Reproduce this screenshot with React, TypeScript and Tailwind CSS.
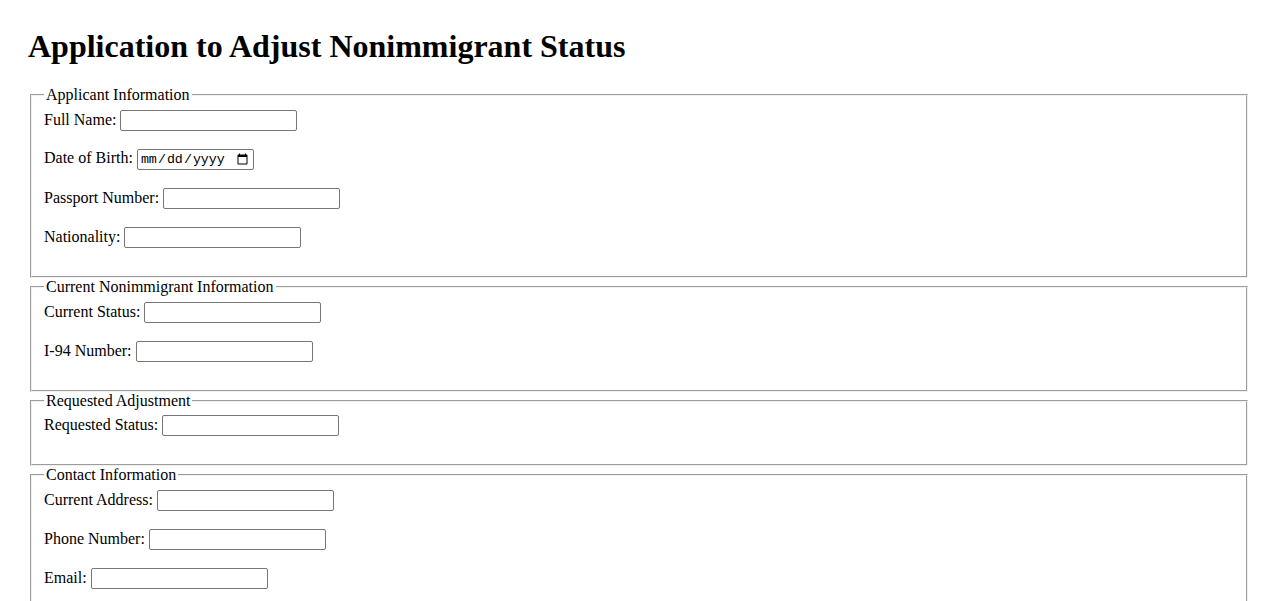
import React from 'react';

type Field = { label: string; type?: string };
type Section = { legend: string; fields: Field[] };

const sections: Section[] = [
  {
    legend: 'Applicant Information',
    fields: [
      { label: 'Full Name:' },
      { label: 'Date of Birth:', type: 'date' },
      { label: 'Passport Number:' },
      { label: 'Nationality:' },
    ],
  },
  {
    legend: 'Current Nonimmigrant Information',
    fields: [{ label: 'Current Status:' }, { label: 'I-94 Number:' }],
  },
  {
    legend: 'Requested Adjustment',
    fields: [{ label: 'Requested Status:' }],
  },
  {
    legend: 'Contact Information',
    fields: [{ label: 'Current Address:' }, { label: 'Phone Number:' }, { label: 'Email:', type: 'email' }],
  },
];

const serif = "font-['Liberation_Serif','Times_New_Roman',serif]";

function FieldRow({ field }: { field: Field }) {
  const isDate = field.type === 'date';
  return (
    <>
      <label>{field.label}</label>{' '}
      {isDate ? (
        <input
          type="date"
          className="h-[21px] w-[117px] rounded-[2px] border border-[#767676] bg-white px-[2px] align-baseline font-['Liberation_Mono','Courier_New',monospace] text-[13.333px] leading-[normal] text-black"
        />
      ) : (
        <input
          type={field.type ?? 'text'}
          className="h-[21px] w-[177px] rounded-[2px] border border-[#767676] bg-white px-[2px] align-baseline font-['Liberation_Sans',Arial,sans-serif] text-[13.333px] leading-[normal] text-black"
        />
      )}
      <br />
      <br />
    </>
  );
}

export default function App() {
  return (
    <div className={`min-h-screen bg-white px-[28px] pt-[28px] pb-[28px] text-[16px] leading-[normal] text-black ${serif}`}>
      <h1 className="mb-[21.44px] text-[32px] font-bold leading-[normal]">Application to Adjust Nonimmigrant Status</h1>
      <form>
        {sections.map((s) => (
          <fieldset
            key={s.legend}
            className="mx-[2px] border-2 border-[#f0f0f0] px-3 pt-[5.6px] pb-[10px] [border-style:groove]"
          >
            <legend className="px-[2px]">{s.legend}</legend>
            {s.fields.map((f) => (
              <FieldRow key={f.label} field={f} />
            ))}
          </fieldset>
        ))}
      </form>
    </div>
  );
}
